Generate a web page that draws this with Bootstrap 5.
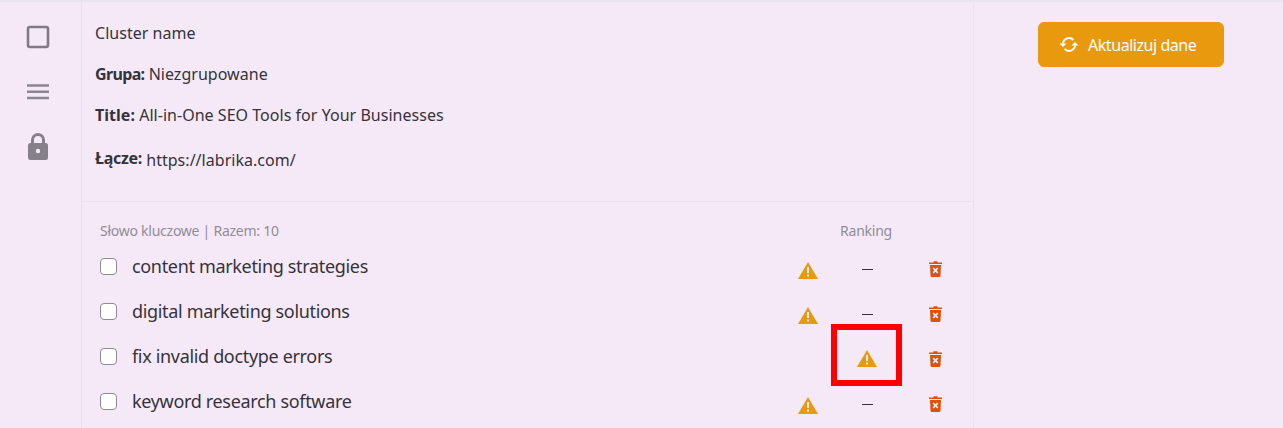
<!DOCTYPE html>
<html lang="pl">
<head>
    <meta charset="UTF-8">
    <meta name="viewport" content="width=device-width, initial-scale=1.0">
    <title>Cluster</title>
    <link href="https://cdn.jsdelivr.net/npm/bootstrap@5.3.0/dist/css/bootstrap.min.css" rel="stylesheet">
    <style>
        html, body { height: 428px; overflow: hidden; }
        body {
            background: #f5e9f8;
            color: #35333a;
            font-family: "Noto Sans", "Open Sans", sans-serif;
            font-size: 16px;
            border-top: 2px solid #e6e4ee;
        }
        .page-wrap { height: 426px; }
        .side-tools { width: 82px; border-right: 1px solid #e8e3ee; padding: 23px 6px 0 0; }
        .side-tools svg { display: block; }
        .tool-menu { margin-top: 35px; }
        .tool-lock { margin-top: 33px; }
        .main-pane { width: 892px; border-right: 1px solid #e8e3ee; }
        .right-pane { width: 309px; padding-top: 20px; padding-left: 64px; }
        .info-block { height: 200px; border-bottom: 1px solid #e9e1ee; padding: 20px 0 0 13px; }
        .info-line { line-height: 22px; margin-bottom: 19px; letter-spacing: .03px; }
        .info-line.link-line { margin-top: 21px; }
        .info-line.link-line b { vertical-align: 2px; letter-spacing: -.3px; }
        .info-line b { font-weight: 700; }
        .info-line b.tight-label { letter-spacing: -.65px; }
        .kw-head { padding: 19px 0 0 18px; height: 42px; font-size: 14px; line-height: 19px; color: #918d96; letter-spacing: -.25px; }
        .kw-head-name { width: 731px; }
        .kw-row { height: 45px; padding-left: 18px; }
        .kw-check { width: 17px; height: 17px; margin: 0 15px 0 0; border: 1px solid #8f8a96; border-radius: 3px; background: #fff; }
        .kw-name { font-size: 18px; width: 666px; letter-spacing: -.33px; }
        .kw-warn { width: 34px; padding-top: 8px; }
        .kw-warn svg, .kw-del svg { display: block; }
        .kw-rank { width: 70px; }
        .kw-del { width: 68px; padding: 5px 0 0 27px; }
        .rank-dash { width: 11px; height: 1px; margin-top: 5px; background: #35333a; }
        .rank-marked svg { margin-top: 4px; }
        .red-mark {
            position: absolute; left: -1px; top: -10px;
            width: 71px; height: 62px;
            border: 6px solid #fe0000;
        }
        .refresh-btn {
            width: 186px; height: 45px; padding: 0 0 0 20px;
            background: #e9990d; border-color: #e9990d; color: #fff;
            font-size: 16px; border-radius: 6px; gap: 9px; letter-spacing: -.45px;
        }
    </style>
</head>
<body>
    <div class="page-wrap d-flex">
        <!-- Left tools -->
        <div class="side-tools d-flex flex-column align-items-center">
            <svg width="24" height="24" viewBox="0 0 24 24"><rect x="2" y="2" width="20" height="20" rx="2" fill="none" stroke="#7f7a84" stroke-width="2.6"/></svg>
            <svg class="tool-menu" width="24" height="16" viewBox="0 0 24 16"><path d="M1 1.5h22M1 7.8h22M1 14h22" stroke="#8b8690" stroke-width="2.5"/></svg>
            <svg class="tool-lock" width="20" height="27" viewBox="0 0 20 27"><path d="M3 11V7a7 7 0 0 1 14 0v4h-3V7a4 4 0 0 0-8 0v4z" fill="#85808a"/><rect y="10" width="20" height="17" rx="2.5" fill="#85808a"/><circle cx="10" cy="18" r="2.2" fill="#f5e9f8"/></svg>
        </div>

        <!-- Main content -->
        <div class="main-pane">
            <div class="info-block">
                <div class="info-line">Cluster name</div>
                <div class="info-line"><b class="tight-label">Grupa:</b> Niezgrupowane</div>
                <div class="info-line"><b>Title:</b> All-in-One SEO Tools for Your Businesses</div>
                <div class="info-line link-line"><b>Łącze:</b> https://labrika.com/</div>
            </div>
            <div class="kw-head d-flex">
                <div class="kw-head-name">Słowo kluczowe | Razem: 10</div>
                <div class="kw-rank text-center">Ranking</div>
            </div>

            <div class="kw-row d-flex align-items-center">
                <input class="form-check-input kw-check" type="checkbox">
                <div class="kw-name">content marketing strategies</div>
                <div class="kw-warn"><svg width="20" height="17" viewBox="0 0 20 17"><path d="M10 0l10 17H0z" fill="#e9990d"/><path d="M9 5h2v6H9zM9 12.5h2v2H9z" fill="#f5e9f8"/></svg></div>
                <div class="kw-rank d-flex justify-content-center"><div class="rank-dash"></div></div>
                <div class="kw-del"><svg width="13" height="16" viewBox="0 0 13 16"><path d="M0 1.5h4.5V.3h4v1.2H13V3H0zM1 4h11l-.5 10.5a1.5 1.5 0 0 1-1.5 1.5H3a1.5 1.5 0 0 1-1.5-1.5z" fill="#dc5305"/><path d="M4.2 7.2l4.6 4.6M8.8 7.2l-4.6 4.6" stroke="#f5e9f8" stroke-width="1.7"/></svg></div>
            </div>
            <div class="kw-row d-flex align-items-center">
                <input class="form-check-input kw-check" type="checkbox">
                <div class="kw-name">digital marketing solutions</div>
                <div class="kw-warn"><svg width="20" height="17" viewBox="0 0 20 17"><path d="M10 0l10 17H0z" fill="#e9990d"/><path d="M9 5h2v6H9zM9 12.5h2v2H9z" fill="#f5e9f8"/></svg></div>
                <div class="kw-rank d-flex justify-content-center"><div class="rank-dash"></div></div>
                <div class="kw-del"><svg width="13" height="16" viewBox="0 0 13 16"><path d="M0 1.5h4.5V.3h4v1.2H13V3H0zM1 4h11l-.5 10.5a1.5 1.5 0 0 1-1.5 1.5H3a1.5 1.5 0 0 1-1.5-1.5z" fill="#dc5305"/><path d="M4.2 7.2l4.6 4.6M8.8 7.2l-4.6 4.6" stroke="#f5e9f8" stroke-width="1.7"/></svg></div>
            </div>
            <div class="kw-row d-flex align-items-center">
                <input class="form-check-input kw-check" type="checkbox">
                <div class="kw-name">fix invalid doctype errors</div>
                <div class="kw-warn"></div>
                <div class="kw-rank rank-marked align-self-stretch d-flex justify-content-center align-items-center position-relative">
                    <svg width="20" height="17" viewBox="0 0 20 17"><path d="M10 0l10 17H0z" fill="#e9990d"/><path d="M9 5h2v6H9zM9 12.5h2v2H9z" fill="#f5e9f8"/></svg>
                    <div class="red-mark"></div>
                </div>
                <div class="kw-del"><svg width="13" height="16" viewBox="0 0 13 16"><path d="M0 1.5h4.5V.3h4v1.2H13V3H0zM1 4h11l-.5 10.5a1.5 1.5 0 0 1-1.5 1.5H3a1.5 1.5 0 0 1-1.5-1.5z" fill="#dc5305"/><path d="M4.2 7.2l4.6 4.6M8.8 7.2l-4.6 4.6" stroke="#f5e9f8" stroke-width="1.7"/></svg></div>
            </div>
            <div class="kw-row d-flex align-items-center">
                <input class="form-check-input kw-check" type="checkbox">
                <div class="kw-name">keyword research software</div>
                <div class="kw-warn"><svg width="20" height="17" viewBox="0 0 20 17"><path d="M10 0l10 17H0z" fill="#e9990d"/><path d="M9 5h2v6H9zM9 12.5h2v2H9z" fill="#f5e9f8"/></svg></div>
                <div class="kw-rank d-flex justify-content-center"><div class="rank-dash"></div></div>
                <div class="kw-del"><svg width="13" height="16" viewBox="0 0 13 16"><path d="M0 1.5h4.5V.3h4v1.2H13V3H0zM1 4h11l-.5 10.5a1.5 1.5 0 0 1-1.5 1.5H3a1.5 1.5 0 0 1-1.5-1.5z" fill="#dc5305"/><path d="M4.2 7.2l4.6 4.6M8.8 7.2l-4.6 4.6" stroke="#f5e9f8" stroke-width="1.7"/></svg></div>
            </div>
        </div>

        <!-- Right side -->
        <div class="right-pane">
            <button class="btn refresh-btn d-flex align-items-center" type="button">
                <svg width="20" height="17" viewBox="0 0 19 17"><path d="M3.5 7.5A6 6 0 0 1 14 4.2M15.5 9.5A6 6 0 0 1 5 12.8" fill="none" stroke="#fff" stroke-width="2"/><path d="M0 7.5h7l-3.5 3.5zM19 9.5h-7l3.5-3.5z" fill="#fff"/></svg>
                Aktualizuj dane
            </button>
        </div>
    </div>
</body>
</html>
